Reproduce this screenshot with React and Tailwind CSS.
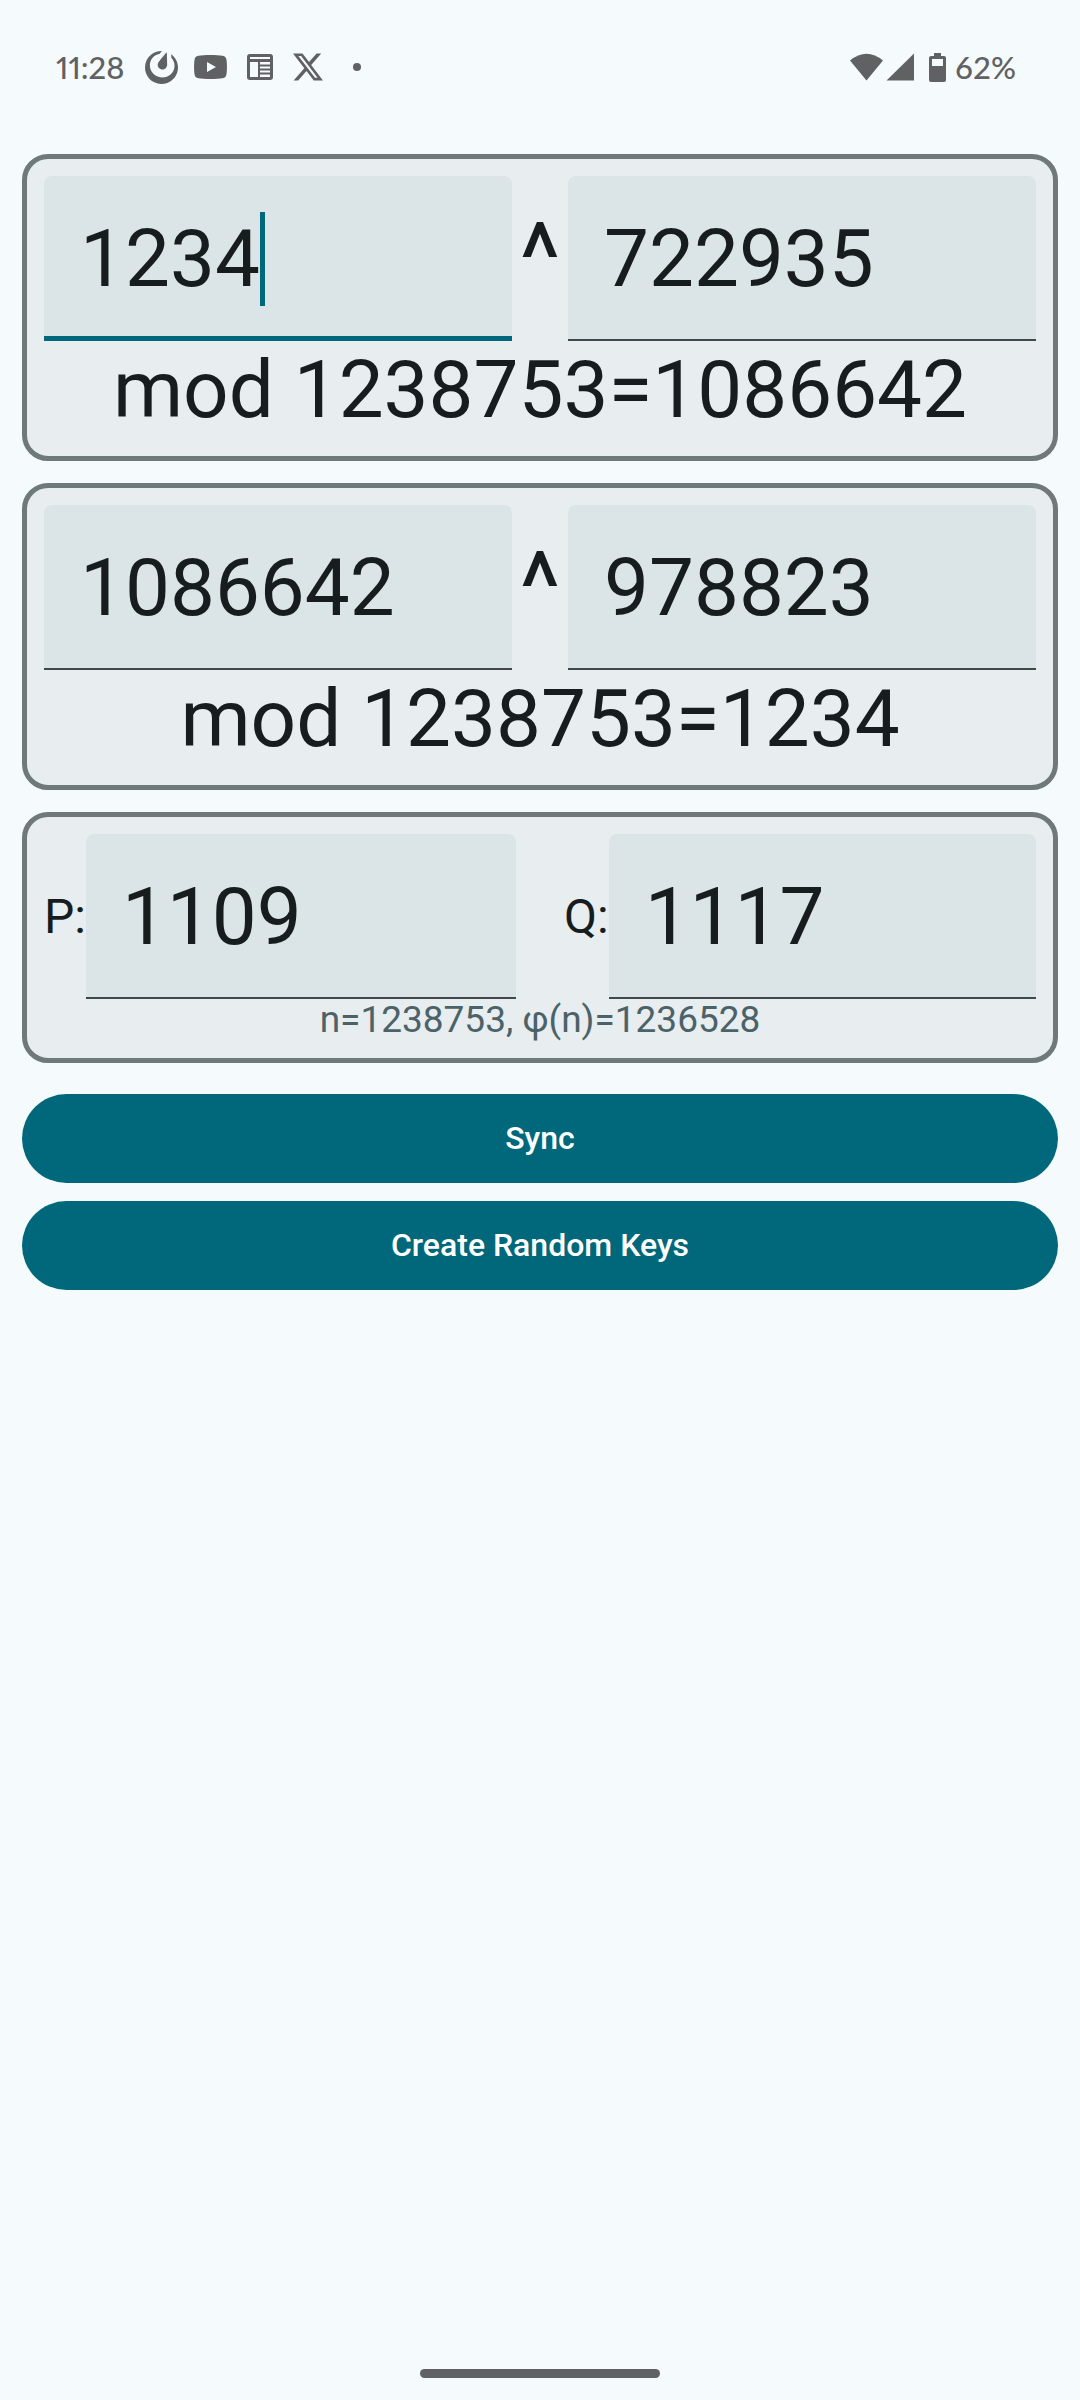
import { useState } from "react";
import { SiMattermost, SiX } from "react-icons/si";

function StatusBar() {
  return (
    <header className="flex h-[134px] items-center justify-between pl-14 pr-16 font-['Lato','Roboto',sans-serif] text-[31px] leading-9 font-medium text-[#5f6162]">
      <div className="flex items-center">
        <span className="w-[89px] proportional-nums">11:28</span>
        <SiMattermost className="size-[33px]" aria-hidden="true" />
        <svg className="ml-4 h-6 w-[33px]" viewBox="0 0 33 24" fill="currentColor" aria-hidden="true">
          <path fillRule="evenodd" d="M4.500 .8C10 -.2 23 -.2 28.500 .8C31 1.200 32.200 2.500 32.500 5C33.100 9 33.100 15 32.500 19C32.200 21.500 31 22.800 28.500 23.200C23 24.200 10 24.200 4.500 23.200C2 22.800 .8 21.500 .5 19C-.1 15 -.1 9 .5 5C.8 2.500 2 1.200 4.500 .8ZM13 7V17L22 12Z" />
        </svg>
        <svg className="ml-5 size-[26px]" viewBox="0 0 26 26" fill="none" stroke="currentColor" aria-hidden="true">
          <rect x="1.500" y="1.500" width="23" height="23" rx="1.500" strokeWidth="3" />
          <path d="M2 6.500H24" strokeWidth="3" />
          <path d="M12 8V24" strokeWidth="2" />
          <path d="M13 11.500H24M13 15.500H24M13 19.500H24" strokeWidth="2" />
        </svg>
        <SiX className="ml-5 size-[30px]" aria-hidden="true" />
        <span className="ml-[30px] size-2 rounded-full bg-current" />
      </div>
      <div className="flex items-center">
        <svg className="h-7 w-[66px]" viewBox="0 0 66 28" fill="currentColor" aria-hidden="true">
          <path d="M0 7.500Q16.500 -6 33 7.500L16.500 27.500Z" />
          <path d="M64 .5V27.500H36.500Z" />
        </svg>
        <svg className="ml-[13px] h-[29px] w-[17px]" viewBox="0 0 17 29" fill="currentColor" aria-hidden="true">
          <path fillRule="evenodd" d="M5 0H12V3H15Q17 3 17 5V27Q17 29 15 29H2Q0 29 0 27V5Q0 3 2 3H5ZM3 6V13H14V6Z" />
        </svg>
        <span className="ml-[9px]">62%</span>
      </div>
    </header>
  );
}

function Card({ children }) {
  return (
    <section className="rounded-[26px] border-5 border-[#6f797a] bg-[#e8edf0] p-[17px] text-[#171d1e]">
      {children}
    </section>
  );
}

function NumberField({ id, label, initial, active = false }) {
  const [value, setValue] = useState(initial);
  return (
    <div className="relative min-w-0 flex-1">
      <input
        id={id}
        aria-label={label}
        inputMode="numeric"
        value={value}
        onChange={(e) => setValue(e.target.value)}
        className={
          active
            ? "block h-[165px] w-full rounded-t-lg border-b-5 border-[#00687a] bg-[#dbe4e6] pt-1.5 pr-9 pl-9 text-[80px] leading-[94px] outline-none"
            : "block h-[165px] w-full rounded-t-lg border-b-2 border-[#3f484a] bg-[#dbe4e6] pt-[3px] pr-9 pl-9 text-[80px] leading-[94px] outline-none"
        }
      />
      {active && <span className="absolute top-9 left-[216px] h-[94px] w-[5px] bg-[#00687a]" />}
    </div>
  );
}

function PowerCard({ name, base, exponent, result, active }) {
  return (
    <Card>
      <div className="flex">
        <NumberField id={name + "-base"} label={name + " base"} initial={base} active={active} />
        <span className="w-14 text-center text-[98px] leading-[165px]">^</span>
        <NumberField id={name + "-exponent"} label={name + " exponent"} initial={exponent} />
      </div>
      <p className="text-center text-[80px] leading-[98px] whitespace-nowrap">{result}</p>
    </Card>
  );
}

function PrimeField({ id, label, initial }) {
  return (
    <div className="flex min-w-0 flex-1 items-center">
      <label htmlFor={id} className="text-[48px] leading-14">{label}</label>
      <NumberField id={id} initial={initial} />
    </div>
  );
}

function PillButton({ children }) {
  return (
    <button type="button" className="h-[89px] w-full rounded-full bg-[#00687a] pb-0.5 text-[32px] leading-10 font-medium text-white">
      {children}
    </button>
  );
}

export default function App() {
  return (
    <div className="flex min-h-screen flex-col bg-[#f5fafd] font-['Roboto',sans-serif]">
      <StatusBar />
      <main className="flex flex-1 flex-col gap-[22px] px-[22px] pt-5">
        <PowerCard name="Encrypt" base="1234" exponent="722935" result="mod 1238753=1086642" active />
        <PowerCard name="Decrypt" base="1086642" exponent="978823" result="mod 1238753=1234" />
        <Card>
          <div className="flex gap-12">
            <PrimeField id="prime-p" label="P:" initial="1109" />
            <PrimeField id="prime-q" label="Q:" initial="1117" />
          </div>
          <p className="text-center text-[37px] leading-[42px] text-[#4b6268]">n=1238753, φ(n)=1236528</p>
        </Card>
        <div className="flex flex-col gap-[18px] pt-[9px]">
          <PillButton>Sync</PillButton>
          <PillButton>Create Random Keys</PillButton>
        </div>
      </main>
      <footer className="flex justify-center pb-[22px]">
        <div className="h-[9px] w-60 rounded-full bg-[#5f6162]" />
      </footer>
    </div>
  );
}
